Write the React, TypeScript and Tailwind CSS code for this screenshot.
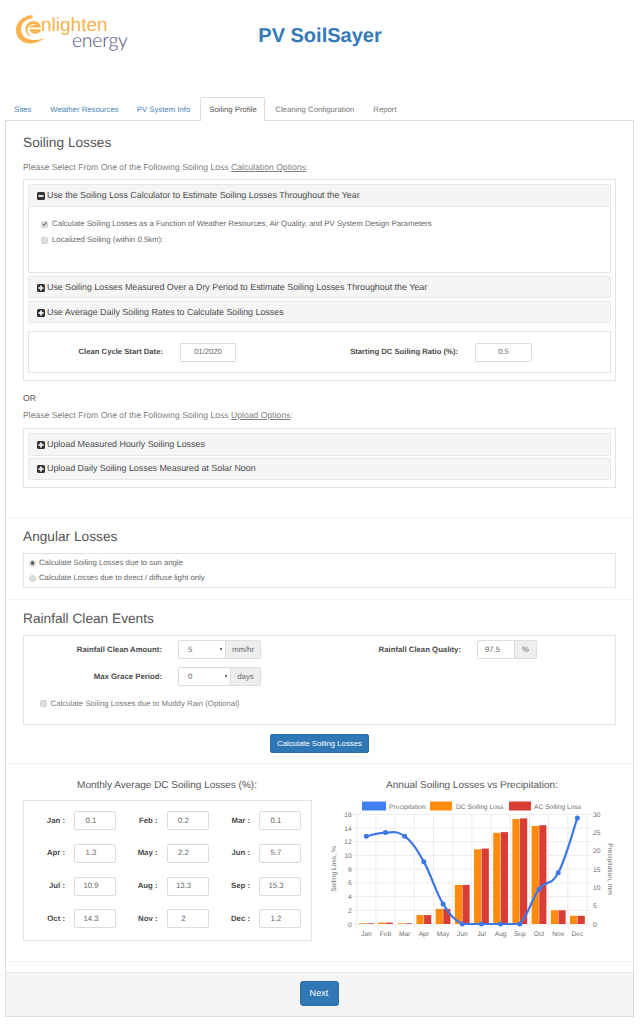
const sans = "font-['Liberation_Sans',Arial,sans-serif]";

function MinusIcon() {
  return (
    <svg width="8" height="8" viewBox="0 0 8 8" className="shrink-0">
      <rect width="8" height="8" rx="1.5" fill="#333" />
      <rect x="1.5" y="3.1" width="5" height="1.8" fill="#f5f5f5" />
    </svg>
  );
}
function PlusIcon() {
  return (
    <svg width="8" height="8" viewBox="0 0 8 8" className="shrink-0">
      <rect width="8" height="8" rx="1.5" fill="#333" />
      <rect x="1.5" y="3.1" width="5" height="1.8" fill="#f5f5f5" />
      <rect x="3.1" y="1.5" width="1.8" height="5" fill="#f5f5f5" />
    </svg>
  );
}
function AccHeader({ open, children, className = "" }: { open?: boolean; children: React.ReactNode; className?: string }) {
  return (
    <div className={`flex items-center gap-[2px] bg-[#f5f5f5] border border-[#e8e8e8] rounded-[2px] pl-[8px] text-[8.88px] text-[#4a4a4a] ${className}`}>
      {open ? <MinusIcon /> : <PlusIcon />}
      <span>{children}</span>
    </div>
  );
}
function Check({ checked }: { checked?: boolean }) {
  return (
    <span className="w-[7px] h-[7px] rounded-[1.5px] bg-[#dedede] border border-[#cfcfcf] shrink-0 flex items-center justify-center">
      {checked && (
        <svg width="6" height="6" viewBox="0 0 6 6">
          <path d="M0.8 3 L2.4 4.6 L5.2 1.2" stroke="#444" strokeWidth="1.2" fill="none" />
        </svg>
      )}
    </span>
  );
}
function Radio({ checked }: { checked?: boolean }) {
  return (
    <span className="w-[7px] h-[7px] rounded-full bg-[#dedede] border border-[#d0d0d0] shrink-0 flex items-center justify-center">
      {checked && <span className="w-[3.5px] h-[3.5px] rounded-full bg-[#555]" />}
    </span>
  );
}
function Addon({ children, className = "" }: { children: React.ReactNode; className?: string }) {
  return (
    <span className={`h-[19px] bg-[#eeeeee] border border-[#dedede] border-l-0 rounded-r-[2px] flex items-center justify-center text-[7.8px] text-[#666] ${className}`}>
      {children}
    </span>
  );
}
function Caret() {
  return <span className="absolute right-[3px] top-[7px] w-0 h-0 border-l-[1.7px] border-r-[1.7px] border-t-[3px] border-l-transparent border-r-transparent border-t-[#333]" />;
}

const months: [string, string][] = [
  ["Jan", "0.1"], ["Feb", "0.2"], ["Mar", "0.1"],
  ["Apr", "1.3"], ["May", "2.2"], ["Jun", "5.7"],
  ["Jul", "10.9"], ["Aug", "13.3"], ["Sep", "15.3"],
  ["Oct", "14.3"], ["Nov", "2"], ["Dec", "1.2"],
];

function Logo() {
  return (
    <div className="relative w-[112px] h-[36px]">
      <svg width="30" height="32" viewBox="0 0 30 32" className="absolute left-0 top-0">
        <path d="M16.5 1 C6.5 2 0 8 0 16 C0 24.5 7 30 15 29.5 C20 29.2 25 27 29 24 C24.5 25.6 20 26.4 15.5 25.8 C9.5 25 5 21 5 15.5 C5 9 10 5 16.5 4.2 Z" fill="#f8b34e" />
        <path d="M9.5 15 C9.5 10 13.5 7 17.5 7 C21.5 7 24.5 9.8 25 13.6 L12.6 13.6 C14 11.4 17.6 10.6 21 11.4 C18.8 9.2 12 9.6 11.4 15.6 C11.2 18.6 13 21.4 16 22.6 C12.6 22.2 9.5 19.4 9.5 15 Z" fill="#f8b34e" />
        <path d="M13 15.2 L25 15.2 C24.6 18.2 21.6 20 18.8 19.8 C16.4 19.6 14.2 18 13 15.2 Z" fill="#f8b34e" />
      </svg>
      <span className="absolute left-[25px] top-[5px] text-[19px] leading-[14px] text-[#f8b34e]">nlighten</span>
      <span className="absolute left-[56px] top-[20px] text-[19.5px] leading-[14px] tracking-[-0.3px] font-['Lato',sans-serif] font-light text-[#4f4f7d]">energy</span>
    </div>
  );
}

function Chart() {
  const left = 356.7 - 320, right = 587 - 320, top = 814.3 - 770, bottom = 924 - 770;
  const x0 = left, plotH = bottom - top, catW = (right - left) / 12;
  const names = ["Jan","Feb","Mar","Apr","May","Jun","Jul","Aug","Sep","Oct","Nov","Dec"];
  const dc = [0.1,0.2,0.1,1.3,2.2,5.7,10.9,13.3,15.3,14.3,2,1.2];
  const ac = [0.1,0.2,0.1,1.3,2.2,5.7,11,13.4,15.4,14.4,2,1.2];
  const rain = [24,25,24,17,5.5,0,0,0,0,9.5,14,29];
  const cx = (i: number) => x0 + catW * (i + 0.5);
  const yL = (v: number) => bottom - (v / 16) * plotH;
  const yR = (v: number) => bottom - (v / 30) * plotH;
  const pts = rain.map((v, i) => [cx(i), yR(v)]);
  let d = `M${pts[0][0]} ${pts[0][1]}`;
  for (let i = 0; i < pts.length - 1; i++) {
    const p0 = pts[Math.max(i - 1, 0)], p1 = pts[i], p2 = pts[i + 1], p3 = pts[Math.min(i + 2, pts.length - 1)];
    const t = 0.2;
    const c1x = p1[0] + (p2[0] - p0[0]) * t;
    const c2x = p2[0] - (p3[0] - p1[0]) * t;
    let c1y = p1[1] + (p2[1] - p0[1]) * t;
    let c2y = p2[1] - (p3[1] - p1[1]) * t;
    c1y = Math.min(c1y, bottom); c2y = Math.min(c2y, bottom);
    d += ` C${c1x} ${c1y} ${c2x} ${c2y} ${p2[0]} ${p2[1]}`;
  }
  const grid = "#ececec", txt = "#6e6e6e";
  return (
    <svg width="320" height="170" viewBox="0 0 320 170" className="block">
      <g fontSize="6.7" fill={txt}>
        <rect x="42" y="31.5" width="24" height="9" fill="#3f7fef" />
        <text x="69" y="38.5">Precipitation</text>
        <rect x="110" y="31.5" width="22" height="9" fill="#ff8a0c" />
        <text x="136" y="38.5">DC Soiling Loss</text>
        <rect x="189" y="31.5" width="22" height="9" fill="#d93d36" />
        <text x="214" y="38.5">AC Soiling Loss</text>
      </g>
      {Array.from({ length: 13 }, (_, i) => (
        <line key={i} x1={x0 + catW * i} x2={x0 + catW * i} y1={top} y2={bottom + 4} stroke={grid} strokeWidth="1" />
      ))}
      {Array.from({ length: 9 }, (_, i) => (
        <line key={i} x1={left - 4} x2={right + 4} y1={yL(i * 2)} y2={yL(i * 2)} stroke={grid} strokeWidth="1" />
      ))}
      {dc.map((v, i) => (
        <rect key={i} x={cx(i) - 7.4} y={yL(v)} width="7.2" height={bottom - yL(v)} fill="#ff8a0c" />
      ))}
      {ac.map((v, i) => (
        <rect key={i} x={cx(i) + 0.2} y={yL(v)} width="7.2" height={bottom - yL(v)} fill="#d93d36" />
      ))}
      <path d={d} fill="none" stroke="#3f78e4" strokeWidth="2.2" />
      {pts.map((p, i) => (
        <circle key={i} cx={p[0]} cy={p[1]} r="2.5" fill="#3f78e4" />
      ))}
      <g fontSize="6.7" fill={txt}>
        {Array.from({ length: 9 }, (_, i) => (
          <text key={i} x={left - 5} y={yL(i * 2) + 2.5} textAnchor="end">{i * 2}</text>
        ))}
        {[0, 5, 10, 15, 20, 25, 30].map((v) => (
          <text key={v} x={right + 6} y={yR(v) + 2.5}>{v}</text>
        ))}
        {names.map((n, i) => (
          <text key={n} x={cx(i)} y={165.5} textAnchor="middle">{n}</text>
        ))}
        <text transform="translate(16 99) rotate(-90)" textAnchor="middle">Soiling Loss, %</text>
        <text transform="translate(288 99) rotate(90)" textAnchor="middle">Precipitation, mm</text>
      </g>
    </svg>
  );
}

export default function App() {
  return (
    <div className={`w-[640px] h-[1024px] bg-white overflow-hidden relative ${sans} [text-rendering:geometricPrecision] text-[7.77px] text-[#555]`}>
      {/* header */}
      <div className="h-[97px] relative flex">
        <div className="pl-[16px] pt-[14px]"><Logo /></div>
        <div className="absolute left-0 right-0 top-[25px] text-center text-[20px] leading-[23px] font-bold text-[#337ab7]">PV SoilSayer</div>
      </div>
      {/* tabs */}
      <div className="flex h-[24px] pl-[5px] relative z-10">
        <a className="px-[9px] h-[24px] pt-[1px] flex items-center text-[#4a82b8]">Sites</a>
        <a className="pl-[10px] pr-[9.5px] h-[24px] pt-[1px] flex items-center text-[#4a82b8]">Weather Resources</a>
        <a className="pl-[8.5px] pr-[10px] h-[24px] pt-[1px] flex items-center text-[#4a82b8]">PV System Info</a>
        <a className="px-[8px] h-[24px] pt-[1px] w-[65px] flex items-center text-[#555] bg-white border border-b-0 border-[#dddddd] rounded-t-[2px] whitespace-nowrap">Soiling Profile</a>
        <a className="px-[10px] h-[24px] pt-[1px] flex items-center text-[#777]">Cleaning Configuration</a>
        <a className="px-[9px] h-[24px] pt-[1px] flex items-center text-[#777]">Report</a>
      </div>
      {/* panel */}
      <div className="w-[629px] ml-[5px] mt-[-1px] h-[897px] border border-[#dddddd] flex flex-col">
        <div className="flex-1 min-h-0 flex flex-col">
          {/* soiling */}
          <section className="h-[397px] px-[17px] border-b border-[#f4f4f4]">
            <h3 className="text-[13.7px] leading-[16px] mt-[14px] text-[#555]">Soiling Losses</h3>
            <p className="mt-[11px] text-[8.65px] leading-[10px] text-[#808080]">Please Select From One of the Following Soiling Loss <span className="underline">Calculation Options</span>:</p>
            <div className="mt-[7px] w-[593px] h-[202px] border border-[#e3e3e3] px-[4px] pt-[4px]">
              <AccHeader open className="h-[23px] pt-[1px]">Use the Soiling Loss Calculator to Estimate Soiling Losses Throughout the Year</AccHeader>
              <div className="h-[66px] border border-t-0 border-[#e3e3e3] rounded-b-[2px] pl-[12px] pt-[13px] flex flex-col gap-[8px] text-[7.8px] leading-[8px] text-[#666]">
                <div className="flex items-center gap-[4px]"><Check checked /><span>Calculate Soiling Losses as a Function of Weather Resources, Air Quality, and PV System Design Parameters</span></div>
                <div className="flex items-center gap-[4px]"><Check /><span>Localized Soiling (within 0.5km):</span></div>
              </div>
              <AccHeader className="h-[22px] mt-[3px] pt-[1px]">Use Soiling Losses Measured Over a Dry Period to Estimate Soiling Losses Throughout the Year</AccHeader>
              <AccHeader className="h-[22px] mt-[3px] pt-[1px]">Use Average Daily Soiling Rates to Calculate Soiling Losses</AccHeader>
              <div className="mt-[8px] h-[42px] border border-[#e3e3e3] flex items-center text-[#4a4a4a] font-bold text-[7.68px]">
                <span className="w-[134px] text-right whitespace-nowrap">Clean Cycle Start Date:</span>
                <span className="ml-[17px] w-[56px] h-[19px] border border-[#dcdcdc] flex items-center justify-center font-normal text-[#666]">01/2020</span>
                <span className="w-[222px] text-right whitespace-nowrap">Starting DC Soiling Ratio (%):</span>
                <span className="ml-[17px] w-[57px] h-[19px] border border-[#dcdcdc] rounded-[2px] flex items-center justify-center font-normal text-[#666]">0.5</span>
              </div>
            </div>
            <p className="mt-[12px] text-[8.65px] leading-[10px] text-[#555]">OR</p>
            <p className="mt-[7px] text-[8.65px] leading-[10px] text-[#808080]">Please Select From One of the Following Soiling Loss <span className="underline">Upload Options</span>:</p>
            <div className="mt-[8px] w-[593px] h-[60px] border border-[#e3e3e3] px-[4px] pt-[4px]">
              <AccHeader className="h-[23px]">Upload Measured Hourly Soiling Losses</AccHeader>
              <AccHeader className="h-[22px] mt-[2px]">Upload Daily Soiling Losses Measured at Solar Noon</AccHeader>
            </div>
          </section>
          {/* angular */}
          <section className="h-[82px] px-[17px] border-b border-[#f4f4f4]">
            <h3 className="text-[13.7px] leading-[16px] mt-[11px] text-[#555]">Angular Losses</h3>
            <div className="mt-[8px] w-[593px] h-[35px] border border-[#e3e3e3] pl-[5px] flex flex-col justify-center gap-[7px] text-[7.75px] leading-[8px] text-[#666]">
              <div className="flex items-center gap-[3px]"><Radio checked /><span>Calculate Soiling Losses due to sun angle</span></div>
              <div className="flex items-center gap-[3px]"><Radio /><span>Calculate Losses due to direct / diffuse light only</span></div>
            </div>
          </section>
          {/* rainfall */}
          <section className="h-[164px] px-[17px] border-b border-[#f4f4f4]">
            <h3 className="text-[13.7px] leading-[16px] mt-[11px] text-[#555]">Rainfall Clean Events</h3>
            <div className="mt-[8px] w-[593px] h-[90px] border border-[#e3e3e3] relative">
              <div className="flex items-center h-[19px] mt-[4px] font-bold text-[#4a4a4a]">
                <span className="w-[138px] text-right whitespace-nowrap">Rainfall Clean Amount:</span>
                <div className="ml-[16px] flex font-normal">
                  <span className="relative w-[48px] h-[19px] border border-[#dcdcdc] rounded-l-[2px] flex items-center pl-[9px] text-[#666]">5<Caret /></span>
                  <Addon className="w-[35px]">mm/hr</Addon>
                </div>
                <span className="w-[200px] text-right whitespace-nowrap">Rainfall Clean Quality:</span>
                <div className="ml-[16px] flex font-normal">
                  <span className="w-[38px] h-[19px] border border-[#dcdcdc] rounded-l-[2px] flex items-center pl-[7px] text-[#666]">97.5</span>
                  <Addon className="w-[22px]">%</Addon>
                </div>
              </div>
              <div className="flex items-center h-[19px] mt-[8px] font-bold text-[#4a4a4a]">
                <span className="w-[138px] text-right">Max Grace Period:</span>
                <div className="ml-[16px] flex font-normal">
                  <span className="relative w-[53px] h-[19px] border border-[#dcdcdc] rounded-l-[2px] flex items-center pl-[9px] text-[#666]">0<Caret /></span>
                  <Addon className="w-[30px]">days</Addon>
                </div>
              </div>
              <div className="flex items-center gap-[3.5px] ml-[16px] mt-[13px] text-[7.8px] leading-[9px] text-[#777]"><Check /><span>Calculate Soiling Losses due to Muddy Rain (Optional)</span></div>
            </div>
            <div className="flex justify-center mt-[9px]">
              <button className="w-[99px] h-[19px] bg-[#2f77b5] border border-[#2e6da4] rounded-[2px] text-white text-[7.8px]">Calculate Soiling Losses</button>
            </div>
          </section>
          {/* monthly + chart */}
          <section className="h-[198px] border-b border-[#f4f4f4] flex">
            <div className="w-[314px] pl-[17px] shrink-0">
              <h4 className="w-[288px] mt-[16px] text-center text-[10px] leading-[12px] text-[#555]">Monthly Average DC Soiling Losses (%):</h4>
              <div className="mt-[8px] w-[289px] h-[141px] border border-[#e3e3e3] grid grid-cols-[repeat(3,92.5px)] grid-rows-[repeat(4,19px)] pt-[10px] gap-y-[13.8px]">
                {months.map(([m, v]) => (
                  <div key={m} className="flex items-center">
                    <span className="w-[41px] text-right font-bold text-[#4a4a4a] whitespace-nowrap">{m} :</span>
                    <span className="ml-[9px] w-[42px] h-[19px] shrink-0 border border-[#dcdcdc] rounded-[2px] flex items-center justify-center pr-[8px] text-[#666]">{v}</span>
                  </div>
                ))}
              </div>
            </div>
            <div className="flex-1 relative">
              <h4 className="absolute left-[-8px] top-[16px] w-[320px] text-center text-[10px] leading-[12px] text-[#555]">Annual Soiling Losses vs Precipitation:</h4>
              <div className="mt-[6px]"><Chart /></div>
            </div>
          </section>
        </div>
        {/* footer */}
        <div className="h-[44px] mt-[10px] bg-[#f5f5f5] border-t border-[#e3e3e3] flex justify-center pt-[8px] shrink-0 pr-[1px]">
          <button className="w-[39px] h-[25px] bg-[#2f77b5] border border-[#2e6da4] rounded-[3px] text-white text-[9.14px]">Next</button>
        </div>
      </div>
    </div>
  );
}
